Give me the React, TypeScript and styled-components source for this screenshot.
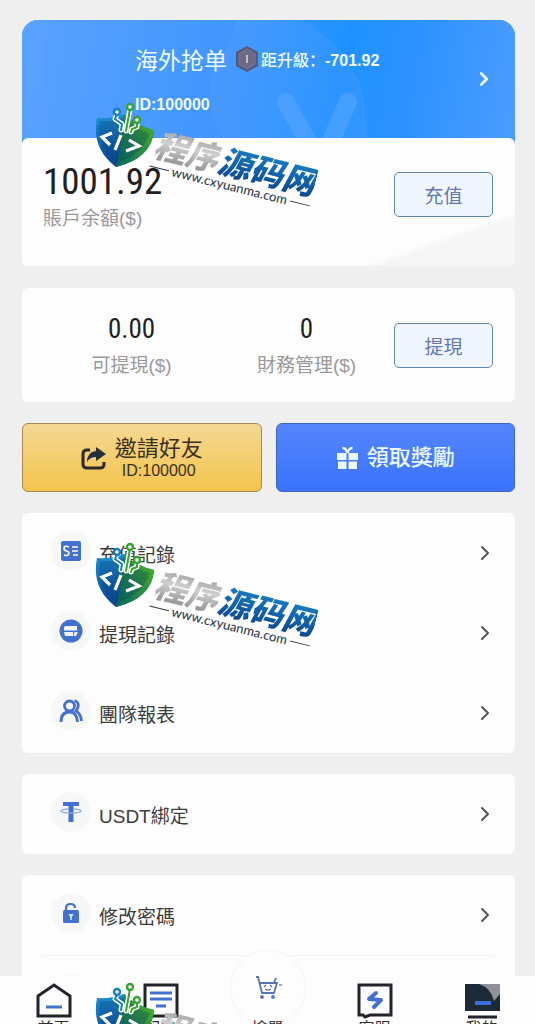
import React from "react";
import styled, { createGlobalStyle, css } from "styled-components";
import { ChevronRight } from "lucide-react";

const sans = '"Liberation Sans", "Noto Sans CJK TC", sans-serif';
const digits = '"Liberation Sans Narrow", "Roboto Condensed", "DejaVu Sans Condensed", sans-serif';

const Global = createGlobalStyle`
  * { box-sizing: border-box; }
  body { margin: 0; background: #efefef; font-family: ${sans}; color: #333; }
  button { font: inherit; color: inherit; cursor: pointer; }
  a { color: inherit; text-decoration: none; }
`;

const Page = styled.div`
  position: relative;
  height: 100vh;
  overflow: hidden;
  display: flex;
  flex-direction: column;
`;

const Content = styled.main`
  flex: 1;
  min-height: 0;
  overflow: hidden;
  display: flex;
  flex-direction: column;
  gap: 21px;
  padding: 20px 20px 0 22px;
  & > * { flex-shrink: 0; }
`;

const Card = styled.section`
  background: #fdfdfd;
  border-radius: 6px;
`;

const Hero = styled(Card)`
  border-radius: 16px 16px 6px 6px;
  background: linear-gradient(#3a98fe 50%, #fdfdfd 50%);
  overflow: hidden;
`;

const Profile = styled.a`
  position: relative;
  height: 118px;
  display: flex;
  align-items: center;
  justify-content: space-between;
  padding: 0 20px 0 113px;
  color: #eefbff;
  background: linear-gradient(100deg, #5aa2ff 0%, #4096fd 42%, #1f92ff 64%, #2f93ff 80%, #4c9dff 100%);
`;

const ProfileArt = styled.svg`
  position: absolute;
  inset: 0;
  width: 100%;
  height: 100%;
`;

const ProfileText = styled.div`
  position: relative;
  display: flex;
  flex-direction: column;
  gap: 20px;
`;

const NameLine = styled.div`
  display: flex;
  align-items: center;
  height: 32px;
  font-size: 16px;
  font-weight: 700;
  svg { margin: 0 2px 0 8px; }
`;

const Name = styled.span`
  font-family: "Noto Sans CJK SC", sans-serif;
  font-size: 23px;
  font-weight: 400;
`;

const NextLevel = styled.span`
  font-family: "Liberation Sans", "Noto Sans CJK SC", sans-serif;
  font-weight: 500;
  b { font-weight: 700; }
`;

const UserId = styled.span`
  font-size: 16px;
  line-height: 20px;
  font-weight: 700;
`;

const Balance = styled.div`
  height: 128px;
  display: flex;
  justify-content: space-between;
  align-items: flex-start;
  padding: 23px 22px 0 21px;
  border-radius: 6px;
  background: linear-gradient(161deg, #fdfdfd 82%, #f6f6f7 84%);
`;

const Figure = styled.div<{ $large?: boolean }>`
  display: flex;
  flex-direction: column;
  align-items: ${(p) => (p.$large ? "flex-start" : "center")};
  gap: ${(p) => (p.$large ? 0 : 5)}px;
  strong {
    font: 400 ${(p) => (p.$large ? 37 : 27)}px/${(p) => (p.$large ? 42 : 32)}px ${digits};
    color: #1f1f24;
  }
  span {
    font-size: 19px;
    line-height: 32px;
    color: #999;
  }
`;

const OutlineButton = styled.button<{ $drop?: boolean }>`
  width: 99px;
  height: 45px;
  margin-top: ${(p) => (p.$drop ? 11 : 0)}px;
  padding: 0;
  border: 1px solid #5f86ad;
  border-radius: 5px;
  background: #f0f6fe;
  color: #6079ad;
  font-size: 19px;
`;

const Funds = styled(Card)`
  display: grid;
  grid-template-columns: 1fr 1fr 99px;
  align-items: center;
  height: 114px;
  padding: 0 22px;
  margin-top: 1px;
`;

const FundFigure = styled(Figure)`
  padding-top: 4px;
`;

const Actions = styled.div`
  display: grid;
  grid-template-columns: 1fr 1fr;
  gap: 14px;
`;

const ActionButton = styled.button<{ $tone: "gold" | "blue" }>`
  height: 69px;
  display: flex;
  align-items: center;
  justify-content: center;
  gap: 8px;
  padding: 0;
  border-radius: 6px;
  font-size: 22px;
  line-height: 26px;
  ${(p) =>
    p.$tone === "gold"
      ? css`
          border: 1px solid #a58a4c;
          background: linear-gradient(#f4d894, #f3c44c);
          color: #3a3020;
        `
      : css`
          border: 1px solid #3f66bd;
          background: linear-gradient(#5585fb, #3973fc);
          color: #eaf8ff;
          font-weight: 500;
        `}
`;

const Stack = styled.span`
  display: flex;
  flex-direction: column;
  align-items: center;
  small { font-size: 16px; line-height: 18px; }
`;

const Menu = styled(Card)`
  display: flex;
  flex-direction: column;
`;

const MenuRow = styled.a`
  height: 80px;
  display: flex;
  align-items: center;
  gap: 8px;
  padding: 0 18px 0 29px;
  font-size: 19px;
  color: #3c3c3c;
  & > span:nth-child(2) { flex: 1; }
  & > svg { color: #555; }
`;

const IconDisc = styled.span`
  width: 40px;
  height: 40px;
  margin-bottom: 4px;
  border-radius: 50%;
  background: #f6f7f7;
  display: grid;
  place-items: center;
`;

const Divider = styled.hr`
  width: calc(100% - 44px);
  margin: 0 auto;
  border: 0;
  border-top: 1px solid #f3f3f3;
`;

const TabBar = styled.nav`
  flex: none;
  height: 48px;
  display: grid;
  grid-template-columns: repeat(5, 1fr);
  background: #fdfdfd;
`;

const Tab = styled.a`
  display: flex;
  flex-direction: column;
  align-items: center;
  gap: 2px;
  padding-top: 6px;
  font-size: 16px;
  line-height: 16px;
  color: #333;
  white-space: nowrap;
`;

const CartTab = styled(Tab)`
  padding-top: 0;
`;

const CartDisc = styled.span`
  flex: none;
  width: 76px;
  height: 76px;
  display: grid;
  justify-items: center;
  padding-top: 24px;
  margin: -26px 0 -7px;
  border: 1px solid #f3f3f3;
  border-radius: 50%;
  background: #fdfdfd;
`;

const Mark = styled.div<{ $top: number }>`
  position: absolute;
  left: 94px;
  top: ${(p) => p.$top}px;
  width: 240px;
  height: 110px;
  pointer-events: none;
`;

const Shield = styled.svg`
  position: absolute;
  left: 0;
  top: 0;
`;

const MarkText = styled.div`
  position: absolute;
  left: 60px;
  top: 22px;
  transform: rotate(14deg);
  transform-origin: 0 50%;
  white-space: nowrap;
`;

const MarkName = styled.div`
  font: italic 900 33px/36px "Noto Sans CJK SC", sans-serif;
  span {
    color: transparent;
    background: linear-gradient(#858585, #cfcfcf 45%, #808080);
    -webkit-background-clip: text;
    background-clip: text;
  }
  span + span {
    background-image: linear-gradient(#1d8ad0, #0a3f86);
  }
`;

const MarkSite = styled.div`
  display: flex;
  align-items: center;
  justify-content: center;
  gap: 3px;
  padding-right: 20px;
  font: 500 13px/12px Lato, sans-serif;
  color: #333f4d;
  &::before, &::after {
    content: "";
    width: 20px;
    height: 1px;
    background: #333f4d;
  }
`;

function Watermark({ top, id }: { top: number; id: string }) {
  return (
    <Mark $top={top} aria-hidden="true">
      <Shield width="62" height="66" viewBox="0 0 62 66">
        <defs>
          <linearGradient id={id + "l"} x1="0" y1="0" x2="0" y2="1">
            <stop offset="0" stopColor="#1a93d3" />
            <stop offset="1" stopColor="#0b3f92" />
          </linearGradient>
          <linearGradient id={id + "r"} x1="0" y1="1" x2="1" y2="0">
            <stop offset="0" stopColor="#046a62" />
            <stop offset="1" stopColor="#4fb321" />
          </linearGradient>
        </defs>
        <path d="M3 16 Q18 17 30 12 Q42 24 60 28 Q58 56 22 65 Q-3 46 3 16Z" fill={`url(#${id}l)`} />
        <path d="M30 12 Q42 24 60 28 Q58 56 22 65 Q28 40 30 12Z" fill={`url(#${id}r)`} />
        <path d="M6 19 Q19 20 30 15 Q41 27 55 31 Q51 52 22 61 Q2 45 6 19Z" fill="#062a66" opacity=".25" />
        <g fill="none" stroke="#fff" strokeWidth="5" strokeLinecap="round" strokeLinejoin="round">
          <path d="M23 12 L21 17 L28 22 L27 28 M36 7 L32 29 M43 20 L43 25 L38 27 L37 30" />
        </g>
        <g fill="none" strokeWidth="2" strokeLinecap="round" strokeLinejoin="round">
          <path d="M23 12 L21 17 L28 22 L27 28" stroke="#177cc0" />
          <path d="M36 7 L32 29 M43 20 L43 25 L38 27 L37 30" stroke="#37a431" />
        </g>
        <g fill="#fff" strokeWidth="2.400">
          <circle cx="23" cy="10" r="3" stroke="#177cc0" />
          <circle cx="36" cy="5" r="3" stroke="#37a431" />
          <circle cx="43" cy="18" r="3" stroke="#37a431" />
        </g>
        <g fill="none" stroke="#fff" strokeWidth="3.200">
          <path d="M18 31 L8 35 L16 43 M27 33 L21 48 M35 38 L45 44 L32 49" />
        </g>
      </Shield>
      <MarkText>
        <MarkName>
          <span>程序</span>
          <span>源码网</span>
        </MarkName>
        <MarkSite>www.cxyuanma.com</MarkSite>
      </MarkText>
    </Mark>
  );
}

const blue = "#4471cf";

const RankBadge = () => (
  <svg width="24" height="28" viewBox="0 0 24 28">
    <path d="M12 1 L23 7 V21 L12 27 L1 21 V7Z" fill="#55597c" />
    <path d="M12 4 L20 9 V19 L12 24 L4 19 V9Z" fill="#6b6984" stroke="#7d7a94" />
    <path d="M12 10 V18" stroke="#c0bccb" strokeWidth="2" />
  </svg>
);

const ShareIcon = () => (
  <svg width="26" height="24" viewBox="0 0 26 24">
    <path d="M9 4 H6 Q2 4 2 8 V18 Q2 22 6 22 H19 Q23 22 23 18 V16" fill="none" stroke="#2b2a28" strokeWidth="3" />
    <path d="M15 1 L25 8 L15 15 V11 Q9 11 6 16 Q6 6 15 5Z" fill="#26303c" />
  </svg>
);

const GiftIcon = () => (
  <svg width="23" height="24" viewBox="0 0 23 24" fill="#eaf8ff">
    <path d="M1 7 H10.500 V14 H1Z M12.500 7 H22 V14 H12.500Z M2 15.500 H10.500 V23 H2Z M12.500 15.500 H21 V23 H12.500Z" />
    <path d="M11.500 7 Q10 2 6.500 2 M11.500 7 Q13 2 16.500 2" fill="none" stroke="#eaf8ff" strokeWidth="2.400" />
  </svg>
);

const RechargeIcon = () => (
  <svg width="22" height="22" viewBox="0 0 22 22">
    <rect x="1" y="1" width="20" height="20" rx="2" fill={blue} />
    <path d="M9 7 Q4 5 4 8.500 Q4 10.500 6.500 11 Q9 11.500 9 13.500 Q8 16.500 4 15 M12 7 H18 M12 11 H18 M13 15 H18" fill="none" stroke="#fff" strokeWidth="1.600" />
  </svg>
);

const WithdrawIcon = () => (
  <svg width="24" height="24" viewBox="0 0 24 24">
    <circle cx="12" cy="12" r="11.500" fill={blue} />
    <path d="M6 7 H18 V11.500 H5 V9Z M5 13 H14 V17 H6Z M15.500 13 H19 L17 17 H14.500Z" fill="#f2f6ff" />
  </svg>
);

const TeamIcon = () => (
  <svg width="24" height="24" viewBox="0 0 24 24" fill="none" stroke={blue} strokeWidth="2.800">
    <circle cx="10.500" cy="7" r="5" />
    <path d="M2 23 Q2 13 10.500 13 Q18 13 18.500 23 M15.500 1.500 Q20 3 19 8 Q18 11 17 12 Q22 15 22.500 22" />
  </svg>
);

const TetherIcon = () => (
  <svg width="24" height="24" viewBox="0 0 24 24">
    <path d="M4 2 H20 V6 H14.500 V22 H9.500 V6 H4Z" fill={blue} />
    <path d="M9 9 Q2 9.500 2 11 Q3 13 12 13 Q21 13 22 11 Q22 9.500 15 9" fill="none" stroke="#8fa9de" strokeWidth="1.500" />
  </svg>
);

const LockIcon = () => (
  <svg width="20" height="22" viewBox="0 0 20 22">
    <path d="M5 10 V6 Q5 2 9.500 2 Q14 2 14 6" fill="none" stroke={blue} strokeWidth="2.200" />
    <rect x="2" y="8" width="16" height="13" rx="1.500" fill={blue} />
    <path d="M7.500 12 H12.500 L10.800 15 V18 H9.200 V15Z" fill="#dfe8fb" />
  </svg>
);

const HomeIcon = () => (
  <svg width="38" height="37" viewBox="0 0 38 37" fill="none">
    <path d="M3 14 L19 3 L35 14 V34 H3Z" stroke="#22242a" strokeWidth="3" />
    <path d="M11 25 H27" stroke={blue} strokeWidth="3" />
  </svg>
);

const OrdersIcon = () => (
  <svg width="38" height="37" viewBox="0 0 38 37" fill="none">
    <path d="M3 3 H35 V34 H3Z" stroke="#22242a" strokeWidth="3" />
    <path d="M8 11 H30 M8 17 H30 M14 24 H24" stroke={blue} strokeWidth="3" />
  </svg>
);

const ServiceIcon = () => (
  <svg width="38" height="37" viewBox="0 0 38 37" fill="none">
    <path d="M3 3 H35 V33 H14 L9 35 L7 33 H3Z" stroke="#22242a" strokeWidth="3" />
    <path d="M20 11 L13 17 L25 18 L18 25" stroke={blue} strokeWidth="4" strokeLinecap="round" strokeLinejoin="round" />
  </svg>
);

const MineIcon = () => (
  <svg width="38" height="37" viewBox="0 0 38 37" fill="none">
    <path d="M2 2 H37 V29 H2Z" fill="#1c2936" />
    <path d="M16 2 H37 V12 L31 19 Q28 6 16 2Z" fill="#8c9298" />
    <path d="M12 21 H28" stroke="#3b6fd8" strokeWidth="4" />
    <path d="M5 35 H34" stroke="#22242a" strokeWidth="3" />
  </svg>
);

const CartIcon = () => (
  <svg width="28" height="26" viewBox="0 0 28 26" fill="none" stroke="#5576b0" strokeWidth="1.800">
    <path d="M2 2 L4 2 L8 18 H20 L23 8 H5 M20 8 L22 3" />
    <path d="M25 10 H28" stroke="#8f9db5" />
    <path d="M10 12 L12 10 M16 10 L18 12 M11 14 Q14 16 17 14" strokeWidth="1.300" />
    <circle cx="8" cy="22" r="1" />
    <circle cx="19" cy="22" r="1" />
  </svg>
);

function Row({ icon, label }: { icon: React.ReactNode; label: string }) {
  return (
    <MenuRow href="#">
      <IconDisc>{icon}</IconDisc>
      <span>{label}</span>
      <ChevronRight size={24} />
    </MenuRow>
  );
}

export default function App() {
  return (
    <Page>
      <Global />
      <Content>
        <Hero>
          <Profile href="#">
            <ProfileArt viewBox="0 0 493 118" preserveAspectRatio="none">
              <path d="M215 0 Q205 30 190 55 Q182 85 200 118 H345 Q350 40 280 0Z" fill="#65a5ff" opacity=".2" />
              <path d="M264 82 L284 118 M326 82 L310 118" stroke="#6fb2ff" strokeWidth="18" strokeLinecap="round" opacity=".35" />
            </ProfileArt>
            <ProfileText>
              <NameLine>
                <Name>海外抢单</Name>
                <RankBadge />
                <NextLevel>距升級：<b>-701.92</b></NextLevel>
              </NameLine>
              <UserId>ID:100000</UserId>
            </ProfileText>
            <ChevronRight size={22} strokeWidth={3} />
          </Profile>
          <Balance>
            <Figure $large>
              <strong>1001.92</strong>
              <span>賬戶余額($)</span>
            </Figure>
            <OutlineButton $drop>充值</OutlineButton>
          </Balance>
        </Hero>

        <Funds>
          <FundFigure>
            <strong>0.00</strong>
            <span>可提現($)</span>
          </FundFigure>
          <FundFigure>
            <strong>0</strong>
            <span>財務管理($)</span>
          </FundFigure>
          <OutlineButton>提現</OutlineButton>
        </Funds>

        <Actions>
          <ActionButton $tone="gold">
            <ShareIcon />
            <Stack>
              邀請好友
              <small>ID:100000</small>
            </Stack>
          </ActionButton>
          <ActionButton $tone="blue">
            <GiftIcon />
            領取獎勵
          </ActionButton>
        </Actions>

        <Menu>
          <Row icon={<RechargeIcon />} label="充值記錄" />
          <Row icon={<WithdrawIcon />} label="提現記錄" />
          <Row icon={<TeamIcon />} label="團隊報表" />
        </Menu>

        <Menu>
          <Row icon={<TetherIcon />} label="USDT綁定" />
        </Menu>

        <Menu>
          <Row icon={<LockIcon />} label="修改密碼" />
          <Divider />
          <Row icon={<LockIcon />} label="" />
        </Menu>
      </Content>

      <TabBar>
        <Tab href="#"><HomeIcon /><span>首頁</span></Tab>
        <Tab href="#"><OrdersIcon /><span>記錄</span></Tab>
        <CartTab href="#"><CartDisc><CartIcon /></CartDisc><span>搶單</span></CartTab>
        <Tab href="#"><ServiceIcon /><span>客服</span></Tab>
        <Tab href="#"><MineIcon /><span>我的</span></Tab>
      </TabBar>

      <Watermark top={102} id="wa" />
      <Watermark top={542} id="wb" />
      <Watermark top={982} id="wc" />
    </Page>
  );
}
